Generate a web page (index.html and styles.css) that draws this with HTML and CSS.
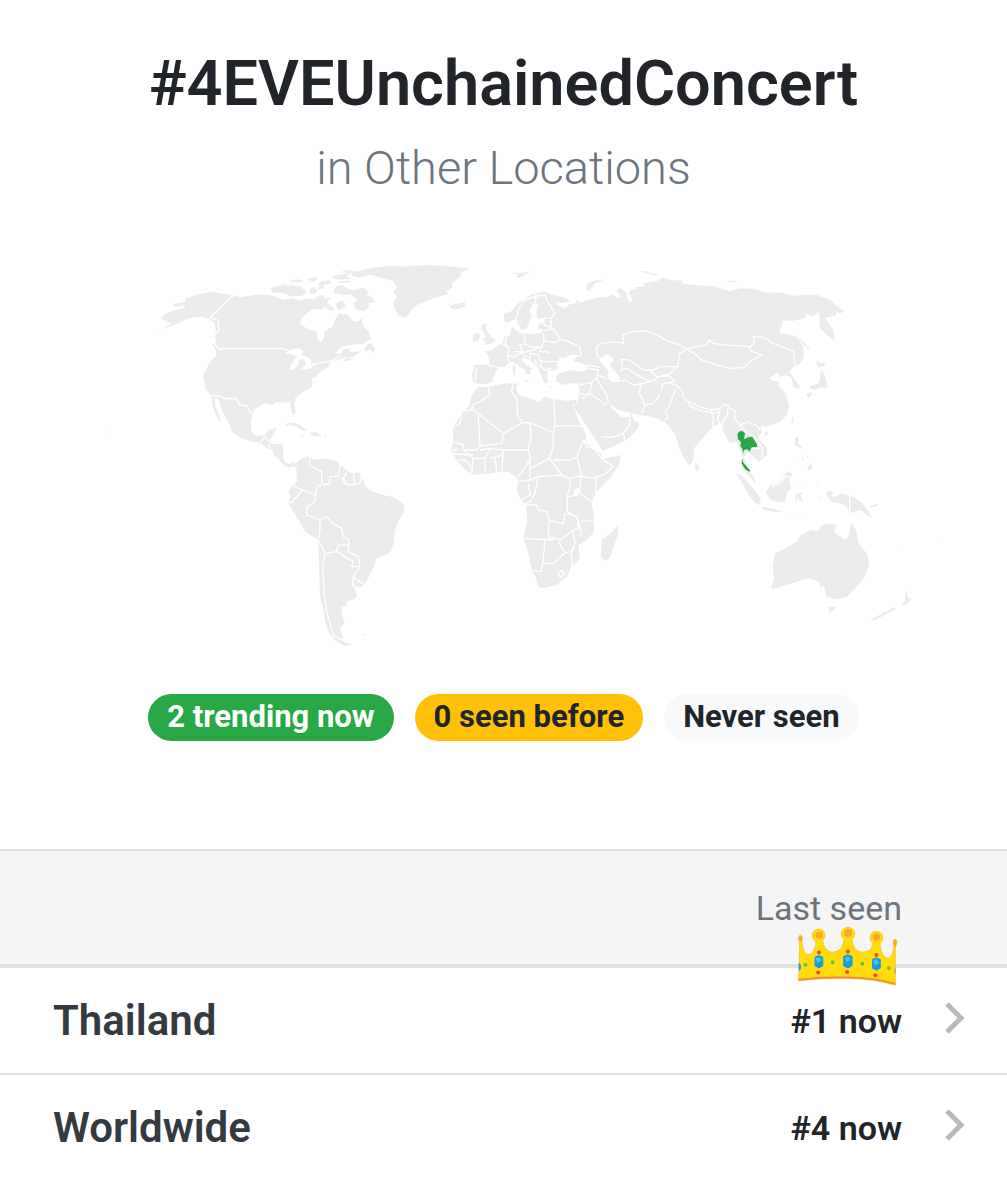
FILE: index.html
```html
<!DOCTYPE html>
<html lang="en">
<head>
  <meta charset="UTF-8">
  <meta name="viewport" content="width=device-width, initial-scale=1.0">
  <title>#4EVEUnchainedConcert</title>
  <link rel="stylesheet" href="styles.css">
</head>
<body>
  <header>
    <h1>#4EVEUnchainedConcert</h1>
    <p class="subtitle">in Other Locations</p>
  </header>

  <svg class="map" viewBox="0 256 1007 400" role="img" aria-label="World map">
    <!-- North America -->
    <g transform="translate(140 250) scale(.3333)">
      <path class="land" d="M62 205L75 192 100 182 120 178 136 170 132 164 118 171 98 168 100 162 136 156 135 148 165 135 215 125 240 130 280 136 300 142 330 137 365 133 400 138 430 150 455 145 480 151 500 145 520 148 545 135 555 138 550 148 575 140 560 158 570 165 545 178 515 178 500 190 485 205 480 222 505 238 530 245 533 268 542 278 553 262 552 245 580 228 583 212 597 190 625 195 640 215 655 213 665 205 669 222 675 235 690 248 686 256 697 265 670 282 630 285 605 290 585 310 600 312 615 296 630 293 628 304 650 306 668 301 640 320 608 325 575 335 565 352 540 365 525 385 518 378 516 410 485 428 466 445 463 460 467 490 460 495 452 475 450 455 430 458 405 456 400 464 375 460 355 470 340 482 332 515 335 545 350 558 375 555 385 540 410 533 400 555 388 570 395 582 428 586 430 630 445 642 462 638 475 648 472 655 460 648 445 654 425 635 408 612 400 600 380 595 360 578 330 574 300 562 275 545 270 525 250 490 236 450 225 442 226 470 240 500 242 520 230 500 218 470 214 438 197 418 190 375 210 335 228 318 228 300 216 284 228 276 225 262 228 245 224 220 208 206 185 200 150 203 120 213 98 222 85 216Z"/>
      <path class="land" d="M38 242L70 233 100 220 152 200 130 213 95 228 60 238ZM206 254l6 8-4 2ZM392 115l20-8 30-5-5 8 20-5 25 6 15 10 0 12-20 6-28 0-15-7-15-5-20 2ZM508 118l14-7 10 10-8 12-14-4ZM532 114l18-8 0 8-12 6ZM445 93l28-5 18 4-14 6ZM502 88l22-8 10 8-14 8ZM530 104l16-11 20-2 8 8-30 8ZM590 95l35-3 15 5-38 2ZM576 78l38-6 20-2-14 9 12 8-30 2-20-3ZM600 66l25-6 20 4-20 6ZM636 78l-4-10 50-12 60-8 38-1-20 10-50 8-30 12-20 6ZM582 118l8-11 18-1 14 10 22 4 26-7 18 15-12 7 22 7 8 14-22 3 4 12-18 13-22-6-9-15 15-13-22-16-25 1-25-7ZM556 176l12-10 15 8-4 8ZM596 182l-10-20 20-12 14 18ZM670 300l10-16 12-6 12 16-4 16-8-10-10 3ZM608 333l10-7 22-2-14 8ZM610 328l0-35 12 12Z"/>
      <path class="land" d="M440 520l20-2 22 8 18 14-12 2-20-13-18-4-15 4ZM512 545l18 1 14 8-4 5-25-2ZM482 554l16 4-13 2ZM554 556l7 2-5 3Z"/>
      <path class="water" d="M434 310L450 300 478 295 490 305 486 315 502 320 515 330 512 345 530 340 528 346 505 357 478 360 490 350 500 345 492 328 478 330 468 355 452 360 450 350 462 330 470 318 458 314Z"/>
      <path class="line" d="M280 136L210 203 235 211 237 243 225 250M222 280L242 300 242 296 430 296 445 302M515 343L545 338 575 333 600 318M215 437L232 437 260 447 290 446 298 465 320 466 334 492M360 578L375 560 385 575M390 580L385 596M425 592L405 605"/>
    </g>
    <!-- Greenland, Iceland, Europe and Asia -->
    <g transform="translate(430 250) scale(.3333)">
      <path class="land" d="M-195 70L-150 58 -90 50 -30 46 10 46 60 49 120 56 95 66 90 80 65 100 68 112 50 124 55 132 10 145 -15 155 -40 165 -60 185 -72 204 -92 198 -108 175 -110 155 -98 140 -110 126 -100 112 -112 92 -145 84ZM55 158l10 8 10-4 30-5 2 12-20 8-22 0ZM245 67l28 2 35-6-22 10-18 12-10-5 5-7-18-3Z"/>
      <path class="land" d="M158 221l14 2-5 15 10 12 8 12 11 6-4 11-30 6 6-9-10-8 10-8-8-14-7-12ZM132 253l15-5 4 12-6 13-17 2-1-10ZM470 120l-2-14 20-13 38-5-30 12-10 12-8 10ZM625 62l20 1 35 10 14 0-20 3-20-6ZM888 91l38 4-25 2ZM278 389l20 2-3 6-10-3ZM248 345l7 0 1 28-7 4ZM355 409l16 2-14 2Z"/>
      <path class="land" d="M130 345L160 343 178 347 178 325 163 302 182 302 200 290 218 280 222 262 240 258 243 238 250 230 256 240 270 250 300 252 330 250 342 240 325 235 328 220 345 222 342 208 362 205 345 202 325 207 318 190 325 165 310 160 298 182 305 200 290 235 275 242 262 215 255 206 235 218 222 215 222 193 245 183 262 162 280 150 300 136 320 130 345 125 370 135 395 140 415 148 418 157 395 158 375 155 388 168 405 174 420 162 438 160 440 148 450 158 470 152 500 143 530 140 550 133 560 143 575 140 560 122 570 113 590 128 590 140 600 158 608 150 596 128 606 118 620 120 615 112 645 108 640 100 680 94 700 82 720 90 760 92 755 100 790 105 850 108 880 118 900 123 930 115 970 116 1000 126 1050 128 1100 138 1120 134 1160 134 1200 150 1220 168 1245 184 1230 190 1220 186 1218 196 1185 204 1210 240 1215 274 1190 255 1170 235 1168 190 1160 187 1150 200 1130 192 1125 204 1090 212 1060 212 1048 248 1085 255 1105 264 1120 290 1122 320 1110 342 1090 350 1078 365 1093 388 1110 408 1102 418 1090 408 1085 385 1068 375 1050 380 1042 368 1018 385 1028 392 1050 395 1044 405 1065 430 1078 465 1070 495 1050 515 1010 530 985 525 950 540 910 580 885 540 880 520 850 520 830 545 790 590 750 600 740 560 722 535 700 510 650 498 625 494 595 487 560 478 540 460 545 475 575 502 600 502 604 486 610 508 630 522 620 540 590 570 560 585 517 603 505 580 480 545 455 505 430 470 440 460 445 445 448 425 445 400 425 400 405 405 380 395 378 378 390 370 420 360 460 365 475 355 470 345 450 338 430 333 445 315 420 315 400 325 390 320 380 345 385 355 370 362 355 360 350 375 355 395 345 402 335 380 322 350 300 330 280 322 275 330 290 345 308 358 300 360 302 372 290 372 285 360 265 348 250 335 235 340 225 350 205 352 195 370 185 395 165 402 145 402 130 395 125 370 132 357Z"/>
      <path class="land" d="M1108 262l14 14 18 22-3 2-18-18ZM1160 330l12 9 13-2-2 11-15 6-8-8ZM1172 360l10 8 5 20 7 20-6 8-14-4-18 8-20-5 10-9 20-6 4-15ZM1128 432l14-6 5 7-12 12ZM1087 505l2-11 2 12-3 14Z"/>
      <path class="water" d="M515 322L530 314 545 318 550 330 540 348 552 362 568 378 562 396 545 396 534 385 535 362 520 345 508 330Z"/>
      <path class="line" d="M175 345L207 353M139 354L136 394M218 283L238 296 233 320 237 338M232 315L250 322 275 308 290 322M230 262L225 282 240 296M283 253L285 280 270 285 278 305 250 305M280 282L310 292 335 290 342 272 340 248M275 308L305 302 335 290 330 305 345 305 358 308M300 325L300 310 325 315 330 330 340 335 385 335M315 330L322 345 345 360 365 355M330 330L335 355M342 272L375 278 392 268 370 235 345 242M340 225L365 232 362 205 375 190 350 150 345 135 325 138 310 130M315 160L320 138 285 150 265 180 258 210M392 268L415 275 450 290 453 315 445 320M475 355L505 360 500 390M470 345L510 352M500 375L530 385M500 312L500 290 515 280 555 275 580 280 580 255 610 245 640 242 680 253 710 272 750 285 770 297 800 290 830 285 835 270 850 280 890 285 960 290 972 280 970 260 1000 262 1040 285 1090 305 1095 345M500 312L508 325M770 297L800 315 815 330 850 342 900 355 940 353 960 335 995 315 962 303 960 290M770 297L748 312 745 345 715 375 735 395M575 350L575 328 600 330 640 360 670 360 690 350 745 350M570 360L590 355 630 380 660 395 700 375 715 375M660 360L680 380 715 378M568 380L565 395 585 390 610 405 632 402 660 395M632 402L628 430 645 465 635 490M645 465L670 460 690 435 700 400 735 395M448 405L485 398 500 385 510 405 530 435 535 460M448 433L480 430 485 398M455 445L480 432 530 465M515 560L545 562 580 550 600 525 600 505M580 550L585 572"/>
    </g>
    <!-- South America -->
    <g transform="translate(270 440) scale(.3333)">
      <path class="land" d="M0 15L35 10 40 20 35 55 45 72 60 72 72 66 82 78 78 70 90 58 120 48 130 60 165 55 200 62 210 75 230 90 240 98 270 98 285 135 300 152 340 165 370 172 400 192 403 215 385 245 375 270 370 315 358 340 320 355 305 395 282 437 270 442 250 435 262 470 240 482 228 485 230 498 213 500 218 535 225 545 210 565 218 590 215 600 235 612 250 614 225 618 195 602 178 580 165 545 162 515 150 470 148 400 145 300 105 275 80 230 58 195 55 185 62 170 55 155 65 140 80 125 80 80 62 76 45 78 28 60 12 45 5 25ZM272 585l14-2-6 5Z"/>
      <path class="line" d="M120 48L118 75 155 95 155 125 160 135 180 130 180 110 205 108 210 75M155 135L140 140 135 185 112 200 110 225 150 240 170 230 188 250 215 265 220 290 237 300 235 335 265 350 270 380 250 410 285 437M230 98L220 115 235 135 270 130 275 100M250 98L253 130M215 110L225 135M70 137L97 150 65 188 55 185M97 150L135 165M150 240L150 270 145 300 165 340 200 335 205 315 235 315M200 335L250 365 245 380 270 380M165 340L158 380 162 450 170 515 183 560 190 588 218 600M250 410L247 440"/>
    </g>
    <!-- Africa -->
    <g transform="translate(430 370) scale(.3333)">
      <path class="land" d="M145 50L175 52 215 42 250 38 262 42 258 55 265 75 300 85 325 97 345 80 375 88 410 92 440 90 437 107 427 100 445 150 465 185 470 215 490 240 512 250 517 268 572 255 568 282 540 325 500 365 485 395 492 440 492 485 470 510 445 525 450 565 425 590 410 620 380 645 340 654 325 652 318 625 305 600 295 550 280 505 292 450 287 405 270 385 260 360 265 335 258 320 235 305 215 305 170 312 130 315 105 300 80 270 63 240 70 215 68 175 95 130 118 105 125 75ZM563 467l3 20-12 35-15 42-15 10-12-15 4-50 30-23Z"/>
      <path class="water" d="M432 360l14-8 2 12-10 14-8-4Z"/>
      <path class="line" d="M175 52L180 75 155 92 128 105 125 118 95 125 90 160 70 175M128 118L220 190 215 220 150 228 140 240 100 240 100 225 70 215M145 135L150 228M250 38L245 65 262 90 262 135 278 158 300 158 370 188M278 158L220 190M372 88L375 165 370 188 370 230 358 265 330 280 300 295M375 167L463 168M300 158L303 195 295 240 220 240 215 305M295 240L302 265 280 300 262 320M300 270L300 330 265 335M300 330L325 320 390 315 420 325 420 350 412 380 412 425 440 440 450 470 455 500M358 265L395 315M370 270L420 270 440 262 460 210 490 235 520 270 550 290 520 315 490 325 450 318 420 325M442 265L455 318M460 210L470 230 490 235M500 325L497 370M452 320L450 370 485 395M445 375L412 380M452 455L490 452M295 340L300 375 275 390M325 320L315 370 300 395 287 400M287 405L320 405 325 420 350 425 358 450 400 462 405 430 440 440M358 450L355 500 370 510 280 505M355 500L390 510 430 480 445 475 442 440M345 512L342 545 335 605 310 602M335 580L370 580 405 548 385 515M405 548L425 545 435 520 430 485M425 545L425 590M385 610l10-8 8 8-10 12ZM100 240L130 265 165 265 180 235 150 240M130 265L125 312M165 265L165 310M195 260L200 305M180 235L220 240M70 240L85 238M65 252L130 255M85 270L105 270 125 290M180 265L215 255"/>
    </g>
    <!-- South Asia and Oceania -->
    <g transform="translate(660 380) scale(.3333)">
      <path class="land" d="M0 120L40 140 52 185 70 230 88 258 100 240 102 205 145 155 160 138 185 130 190 155 208 188 230 185 248 230 247 265 265 285 288 312 282 292 262 265 252 230 265 215 285 235 298 245 322 225 320 205 295 175 305 155 300 130 190 70 0 30Z"/>
      <path class="land" d="M106 246l12 16-5 12-7-4ZM228 281l16 4 28 32 20 22 10 20-2 17-16-8-20-28-18-32ZM304 380l20 3 22 4 24 9-26-1-34-6ZM330 316l22-4 15-15 15-25 16 10-12 15 8 28-12 12-6 28-15 2-28-6-16-22ZM405 370l3-28 25-5-12 8 8 22-10-6-6-8-4 12ZM315 157l10-3-3 13-8 0ZM394 130l6-18 0 15-4 7ZM405 170l10 2 0 18 14 18-12-6-12-8ZM442 262l12-14 3 17-9 8ZM425 235l8-4-2 10ZM440 222l7 14-6-3ZM408 226l-8 18 2-10ZM470 312l6 3-3 7ZM385 401l26 3-26-1ZM412 321l24-1-20 3ZM470 353l20-1-15 4ZM435 412l20-10-18 10ZM498 336l14-4 8 6-8 8 12 6 22-12 34 10 26 18 16 20 14 26-22-14-14-10-30 10-12-22-20-8-22-4-8-8ZM628 377l28-6-6 8-18 3ZM655 360l2 6ZM727 505l6 6ZM712 405l6 4Z"/>
      <path class="land" d="M345 520L375 505 410 485 422 465 455 450 475 452 485 435 505 430 530 435 522 455 555 480 565 470 575 425 590 455 595 490 620 520 628 550 615 590 585 625 560 652 530 658 498 650 492 618 480 622 478 605 445 595 420 602 380 615 340 627 332 620 342 600 338 560ZM508 680l20 2-8 10-14 8ZM738 628l8 28 9 0-12 14-18 10 10-20ZM706 681l0 8-25 12-28 16-20 7 5-8 32-18Z"/>
      <path class="line" d="M28 8L48 16 66 32 72 55 90 66 125 82 152 90 180 86 188 76 205 75 212 86 224 92 225 118 240 135M85 64L88 76 120 92 152 98M155 85L155 100 180 98 178 90M155 100L160 115 158 138M178 100L172 118 182 134M205 82L202 105 190 120 188 140M45 30L36 55 28 80 15 92 24 112 14 122M240 135L262 126 290 136 300 150M240 138L265 160 290 178 308 205 305 232M275 204L300 206M335 320L365 308 375 290 390 290M569 345L569 400M255 270L268 276"/>
      <path class="trending" d="M232 163L237 155 246 152 255 160 252 178 265 172 277 170 284 182 291 193 291 201 275 202 268 216 262 208 252 210 250 220 246 205 241 198 243 186 234 178ZM246 234l4 14 9 10 12 14-3 3-11-6-12-18Z"/>
    </g>
    <path class="land" d="M105 431h1v2h-1ZM937 539h2v1h-2ZM902 548h1v2h-1Z"/>
  </svg>

  <div class="badges">
    <span class="badge badge-now">2 trending now</span>
    <span class="badge badge-before">0 seen before</span>
    <span class="badge badge-never">Never seen</span>
  </div>

  <table>
    <thead>
      <tr>
        <th></th>
        <th class="seen">Last seen</th>
        <th></th>
      </tr>
    </thead>
    <tbody>
      <tr>
        <td class="place">Thailand</td>
        <td class="rank">
          <svg class="crown" viewBox="0 0 300 180" aria-hidden="true">
            <path fill="#ffdc0a" stroke="#f7b916" stroke-width="2" d="M5 163L8 45Q3 38 6 30Q11 22 16 32Q18 38 14 45Q18 85 35 85Q55 80 56 45A19 19 0 1 1 76 43Q82 78 109 78Q135 75 140 40A20 20 0 1 1 163 40Q168 76 193 78Q220 80 226 51A19 19 0 1 1 246 51Q251 94 270 96Q286 92 288 56Q284 46 289 40Q297 40 297 50L292 64L292 176Q230 157 150 156Q70 154 5 163Z"/>
            <path fill="none" stroke="#ef983b" stroke-width="6" d="M5 160Q75 151 150 153Q235 154 292 172"/>
            <g fill="#f9a72d">
              <circle cx="66" cy="27" r="11"/><circle cx="152" cy="21" r="12"/><circle cx="236" cy="33" r="11"/>
              <ellipse cx="10" cy="38" rx="5" ry="9"/><ellipse cx="291" cy="49" rx="5" ry="10"/>
            </g>
            <g fill="#159edb">
              <path d="M52 92l12-6 14 6v26l-12 8-14-7ZM137 90l14-6 14 6v28l-13 8-15-7ZM223 99l12-6 14 6v26l-12 8-14-7ZM5 110q7 2 7 12t-7 10ZM292 122q-5 10 0 22Z"/>
            </g>
            <g fill="#45c5f1">
              <path d="M55 96l10-4 8 10-12 8ZM142 95l10-5 8 10-12 8ZM226 103l10-4 8 10-12 8Z"/>
            </g>
            <g fill="#e84b35">
              <circle cx="65" cy="79" r="6"/><circle cx="151" cy="76" r="6"/><circle cx="236" cy="86" r="6"/>
              <circle cx="63" cy="138" r="6"/><circle cx="149" cy="137" r="6"/><circle cx="233" cy="146" r="6"/>
            </g>
            <g fill="#78bd3e">
              <circle cx="25" cy="115" r="6"/><circle cx="106" cy="108" r="6"/><circle cx="194" cy="112" r="6"/><circle cx="273" cy="125" r="6"/>
            </g>
          </svg>
          #1 now
        </td>
        <td class="go"><svg class="chevron" viewBox="0 0 20 32" aria-hidden="true"><path d="M2 2L16 16 2 30"/></svg></td>
      </tr>
      <tr>
        <td class="place">Worldwide</td>
        <td class="rank">#4 now</td>
        <td class="go"><svg class="chevron" viewBox="0 0 20 32" aria-hidden="true"><path d="M2 2L16 16 2 30"/></svg></td>
      </tr>
    </tbody>
  </table>
</body>
</html>
```

FILE: styles.css
```css
body {
  font-family: Roboto, "Liberation Sans", sans-serif;
  margin: 0;
  background: #fff;
  color: #212529;
}
header {
  padding-top: 46px;
  text-align: center;
}
h1 {
  margin: 0;
  font-size: 63px;
  font-weight: 600;
  line-height: 76px;
}
.subtitle {
  margin: 16px 0 0;
  font-size: 47px;
  font-weight: 300;
  line-height: 60px;
  color: #6c757d;
}
.map {
  display: block;
  width: 100%;
  margin-top: 58px;
}
.land {
  fill: #ebebeb;
}
.water {
  fill: #fff;
}
.line {
  fill: none;
  stroke: #fff;
  stroke-width: 4;
  stroke-linejoin: round;
}
.trending {
  fill: #28a745;
}
.badges {
  display: flex;
  justify-content: center;
  gap: 21px;
  margin-top: 38px;
}
.badge {
  padding: 0 19px 2px;
  border-radius: 24px;
  font-size: 31px;
  font-weight: 700;
  line-height: 45px;
}
.badge-now {
  background: #28a745;
  color: #fff;
}
.badge-before {
  background: #ffc107;
}
.badge-never {
  background: #f8f9fa;
}
table {
  width: 100%;
  margin-top: 108px;
  border-collapse: separate;
  border-spacing: 0;
}
th {
  height: 113px;
  padding: 0;
  background: #f5f5f5;
  border-top: 2px solid #dee2e6;
  border-bottom: 4px solid #dee2e6;
}
.seen {
  font-size: 34px;
  font-weight: 400;
  text-align: right;
  color: #6c757d;
}
td {
  height: 105px;
  padding: 0;
}
tr + tr td {
  border-top: 2px solid #dee2e6;
}
.place {
  padding-left: 53px;
  font-size: 42px;
  font-weight: 600;
  color: #343a40;
}
.rank {
  position: relative;
  font-size: 34px;
  font-weight: 600;
  text-align: right;
}
/* the crown sits on top of the header edge */
.crown {
  position: absolute;
  top: -42px;
  right: 4px;
  width: 101px;
}
.go {
  width: 105px;
}
.chevron {
  display: block;
  width: 20px;
  margin: 0 0 6px 43px;
}
.chevron path {
  fill: none;
  stroke: #b9b9b9;
  stroke-width: 5;
}
```
